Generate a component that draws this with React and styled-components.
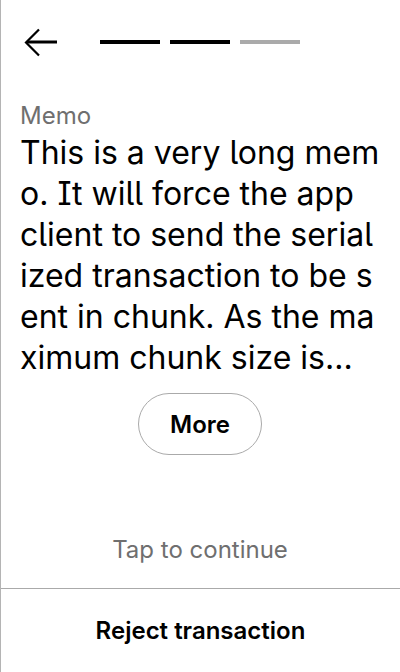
import React from "react"
import styled, { createGlobalStyle } from "styled-components"

const GlobalStyle = createGlobalStyle`
  html, body {
    margin: 0;
    padding: 0;
    background: #fff;
  }
  body {
    font-family: Inter, "Noto Sans", sans-serif;
    font-feature-settings: "cv05", "cv08";
    color: #000;
  }
`

// the device cuts the memo at fixed pixel widths, so keep its lines
const MEMO_LINES = [
  "This is a very long mem",
  "o. It will force the app",
  "client to send the serial",
  "ized transaction to be s",
  "ent in chunk. As the ma",
  "ximum chunk size is...",
]

// layout
const Screen = styled.div`
  width: 400px;
  height: 672px;
  box-sizing: border-box;
  border-left: 1px solid #b4b4b4;
  display: flex;
  flex-direction: column;
  overflow: hidden;
`
const Header = styled.div`
  height: 86px;
  display: flex;
  align-items: center;
  padding-left: 23px;
`
const BackButton = styled.button`
  width: 34px;
  height: 34px;
  padding: 0;
  border: none;
  background: none;
  display: flex;
  align-items: center;
  justify-content: center;
  margin-right: 42px;
`
const Steps = styled.div`
  display: flex;
  gap: 10px;
  margin-top: -2px;
`
const Step = styled.div`
  width: 60px;
  height: 4px;
  background: ${p => (p.done ? "#000" : "#aaa")};
`
const Content = styled.div`
  flex: 1;
  display: flex;
  flex-direction: column;
  padding: 14px 20px 0 19px;
`
const Label = styled.div`
  font-size: 24px;
  line-height: 32px;
  color: #6f6f6f;
`
const MemoText = styled.div`
  font-size: 32px;
  line-height: 41px;
  white-space: nowrap;
`
const MemoLine = styled.div``
const MoreButton = styled.button`
  align-self: center;
  margin-top: 15px;
  width: 124px;
  height: 62px;
  border: 1px solid #aaa;
  border-radius: 31px;
  background: #fff;
  font-family: inherit;
  font-feature-settings: inherit;
  font-size: 24px;
  font-weight: 600;
  color: #000;
`
const TapHint = styled.div`
  margin-top: auto;
  padding-bottom: 22px;
  text-align: center;
  font-size: 24px;
  line-height: 32px;
  color: #6f6f6f;
`
const Footer = styled.button`
  height: 84px;
  border: none;
  border-top: 1px solid #aaa;
  background: #fff;
  font-family: inherit;
  font-feature-settings: inherit;
  font-size: 24px;
  font-weight: 600;
  color: #000;
  padding: 0;
`

function BackArrow() {
  return (
    <svg width="34" height="30" viewBox="0 0 34 30" fill="none">
      <path d="M33 14H3" stroke="#000" strokeWidth="3" />
      <path d="M15 1.5L2 14.5L15 27.5" stroke="#000" strokeWidth="2.2" />
    </svg>
  )
}

export default function App() {
  return (
    <Screen>
      <GlobalStyle />
      <Header>
        <BackButton aria-label="Back">
          <BackArrow />
        </BackButton>
        <Steps>
          <Step done />
          <Step done />
          <Step />
        </Steps>
      </Header>
      <Content>
        <Label>Memo</Label>
        <MemoText>
          {MEMO_LINES.map(line => (
            <MemoLine key={line}>{line}</MemoLine>
          ))}
        </MemoText>
        <MoreButton>More</MoreButton>
        <TapHint>Tap to continue</TapHint>
      </Content>
      <Footer>Reject transaction</Footer>
    </Screen>
  )
}
